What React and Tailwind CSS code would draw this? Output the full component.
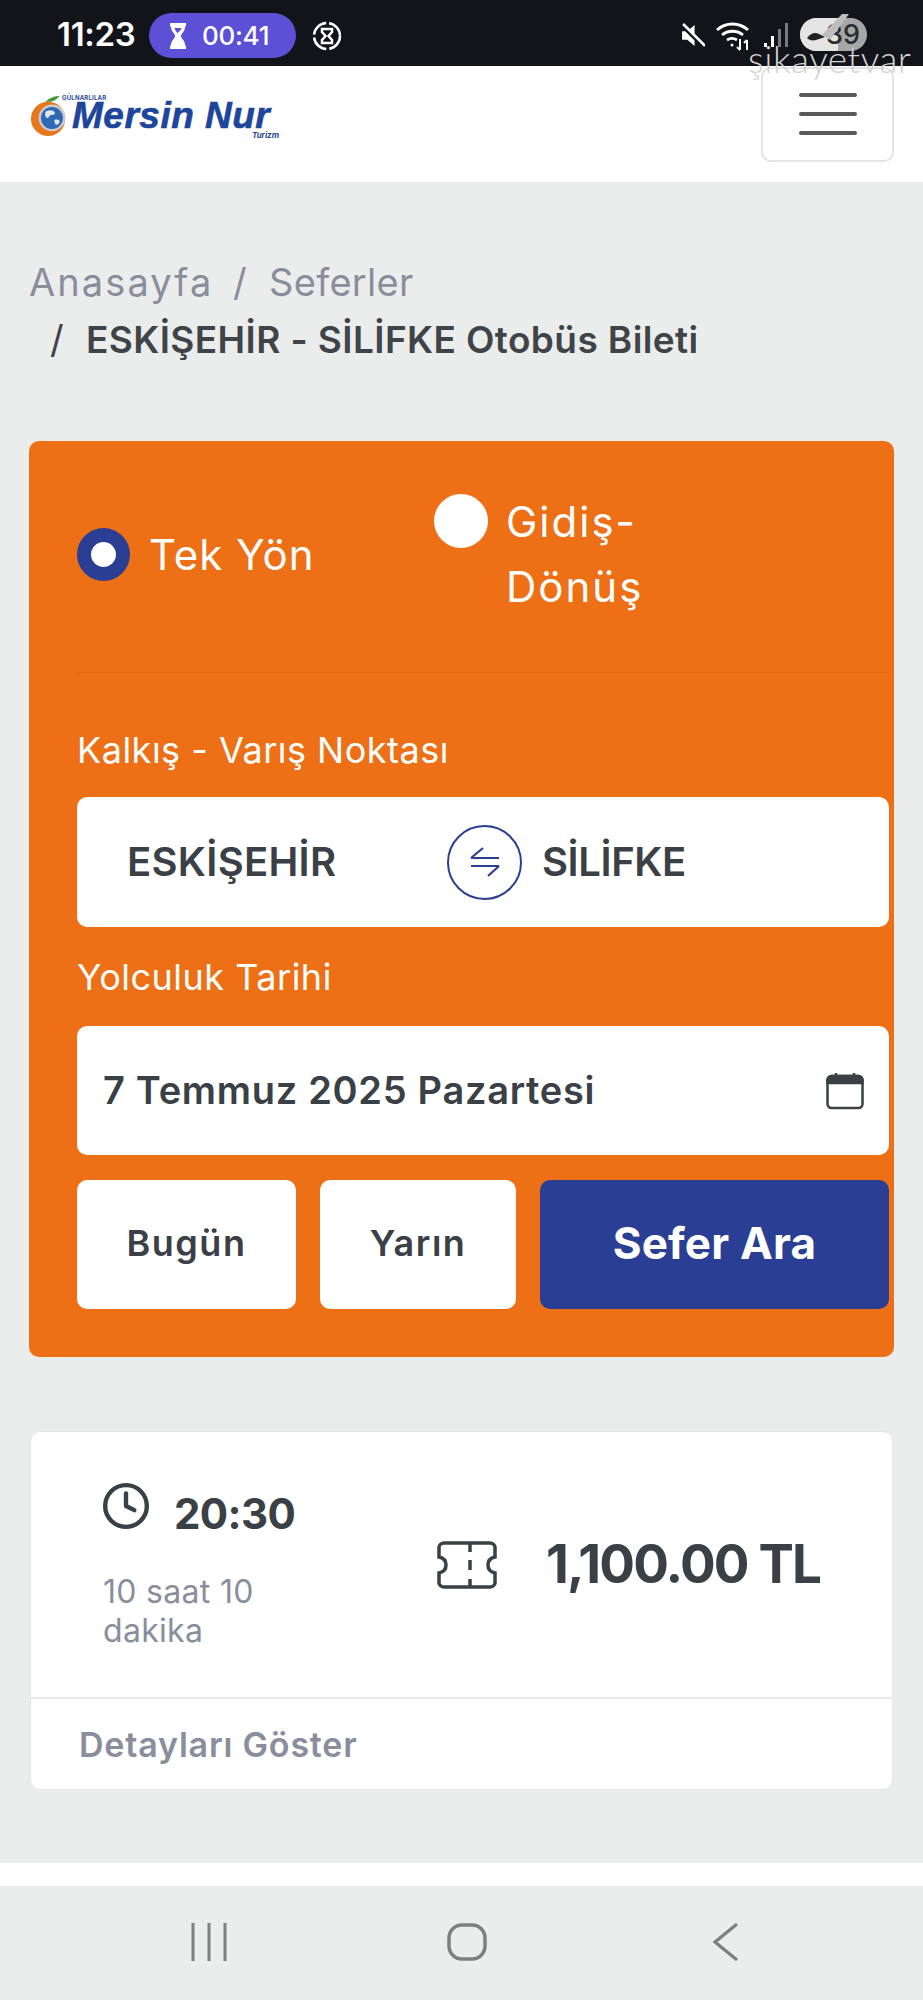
import { Clock } from 'lucide-react';

const font = 'font-["Inter","Noto_Sans",sans-serif]';

function StatusBar() {
    return (
        <div className="relative h-[66px] bg-[#13141a] flex items-center pt-[5px] pl-[57px] text-white">
            <span className="text-[33px] font-semibold tracking-[-0.3px] w-[84px] mt-[-1px]">11:23</span>
            <div className="ml-[8px] w-[147px] h-[45px] rounded-full bg-[#5b50d6] flex items-center pl-[19px] gap-[14px]">
                <svg viewBox="0 0 20 28" className="w-[20px] h-[28px]">
                    <path d="M2 1h16v3l-1 1c0 5-4 6-4 9s4 4 4 9l1 1v3H2v-3l1-1c0-5 4-6 4-9S3 10 3 5L2 4z" fill="#fff" />
                    <path d="M6.500 6h7c-.5 2.500-3.500 4-3.500 5S7 8.500 6.500 6z" fill="#5b50d6" />
                </svg>
                <span className="text-[26px] font-medium tracking-[-0.3px]">00:41</span>
            </div>
            <svg viewBox="0 0 30 30" className="ml-[16px] w-[30px] h-[30px]" fill="none" stroke="#fff">
                <circle cx="15" cy="15" r="13" strokeWidth="2.500" strokeDasharray="18 3" />
                <path d="M10 8h10v3l-3.500 4 3.500 4v3H10v-3l3.500-4L10 11z" strokeWidth="2.500" />
            </svg>

            <div className="ml-auto mr-[173px] flex items-center">
                <svg viewBox="0 0 24 24" className="w-[25px] h-[25px]" fill="#fff">
                    <path d="M2 8h5l7-6v20l-7-6H2z" />
                    <path d="M2 2l21 21" stroke="#13141a" strokeWidth="4" />
                    <path d="M3 1l21 21" stroke="#fff" strokeWidth="2.500" />
                </svg>
                <svg viewBox="0 0 34 30" className="ml-[11px] w-[34px] h-[30px]" fill="none" stroke="#fff" strokeWidth="2.800">
                    <path d="M1 9c9-8 22-8 31 0" />
                    <path d="M6 14c6-5 15-5 21 0" />
                    <path d="M11 19c3-2 7-2 10 0" />
                    <circle cx="16" cy="24" r="1.500" fill="#fff" stroke="none" />
                    <path d="M24 18v11M21 26l3 3M31 29V19M28 22l3-3" strokeWidth="2" />
                </svg>
            </div>

            {/* signal bars */}
            <svg viewBox="0 0 28 28" className="absolute left-[763px] top-[22px] w-[28px] h-[28px]">
                <rect x="1" y="21" width="3" height="4" fill="#fff" />
                <rect x="8" y="14" width="3" height="11" fill="#fff" />
                <rect x="15" y="7" width="3" height="18" fill="#77797d" />
                <rect x="22" y="1" width="3" height="24" fill="#77797d" />
            </svg>

            {/* battery pill with the watermark check on top */}
            <div className="absolute left-[800px] top-[18px] w-[67px] h-[33px] rounded-full bg-[#a6a6a6] overflow-hidden flex items-center">
                <div className="w-[38px] h-full bg-[#e4e4e4]" />
                <span className="absolute left-[26px] text-[27px] leading-[24px] font-medium text-[#2b2b2f]">39</span>
            </div>
            <svg viewBox="0 0 46 36" className="absolute left-[804px] top-[13px] w-[46px] h-[36px]">
                <path d="M3 25c4-5 8-6 12-4l6 3-9 3c-4 1-7 0-9-2z" fill="#222" />
                <path d="M18 22L38 1h7L26 27z" fill="#bdbdbd" />
            </svg>

            <span className="absolute left-[748px] top-[46px] text-[37px] leading-[26px] font-['Lato'] font-light tracking-[0.5px] text-[#d4d4d4] z-10">
                şikayetvar
            </span>
        </div>
    );
}

function Header() {
    return (
        <div className="h-[116px] bg-white flex items-center justify-between pl-[29px] pr-[29px]">
            <div className="relative w-[250px] h-[44px] mt-[-14px]">
                <svg viewBox="0 0 44 44" className="absolute left-0 top-0 w-[42px] h-[42px]">
                    <circle cx="20" cy="25" r="18" fill="#e8761c" />
                    <circle cx="24" cy="24" r="14" fill="#c9ccd0" />
                    <circle cx="24" cy="24" r="11.500" fill="#2f68b4" />
                    <path d="M18 17c4-2 8-1 9 1s-2 3-4 3-2 4-4 3-3-5-1-7zM27 26c3-1 5 0 5 2s-3 4-4 3-2-4-1-5z" fill="#dfe6ee" />
                    <path d="M17 7c4-4 10-6 15-6-3 4-8 7-15 6z" fill="#3f9a36" />
                </svg>
                <span className="absolute left-[33px] top-0 text-[6px] leading-[5px] font-bold tracking-[0.2px] text-[#2c4a9a]">GÜLNARLILAR</span>
                <span className="absolute left-[43px] top-[7px] text-[37px] leading-[28px] font-['Liberation_Sans'] font-bold italic tracking-[0.5px] [-webkit-text-stroke:0.6px_#1d459b] text-[#1d459b] whitespace-nowrap">
                    Mersin Nur
                </span>
                <span className="absolute right-0 top-[36px] text-[8px] leading-[8px] font-bold italic text-[#1d459b]">Turizm</span>
            </div>
            <div className="w-[133px] h-[95px] mt-[-20px] bg-white border-2 border-[#e3e3e3] rounded-[10px] flex flex-col items-center justify-center gap-[15px]">
                <div className="w-[58px] h-[4px] rounded-sm bg-[#5a5a5a]" />
                <div className="w-[58px] h-[4px] rounded-sm bg-[#5a5a5a]" />
                <div className="w-[58px] h-[4px] rounded-sm bg-[#5a5a5a]" />
            </div>
        </div>
    );
}

function Breadcrumb() {
    return (
        <div className="pt-[72px] text-[38px] leading-[57px] text-[#8a8d9c]">
            <div className="flex">
                <span className="w-[204px] tracking-[2.100px]">Anasayfa</span>
                <span className="w-[36px]">/</span>
                <span className="tracking-[0.300px]">Seferler</span>
            </div>
            <div className="flex pl-[21px] text-[#3f4448]">
                <span className="w-[36px]">/</span>
                <span className="font-semibold text-[37px] tracking-[0.400px]">ESKİŞEHİR - SİLİFKE Otobüs Bileti</span>
            </div>
        </div>
    );
}

function SearchCard() {
    return (
        <div className="mt-[73px] bg-[#ee7016] rounded-[10px] pt-[48px] pr-[5px] pb-[48px] pl-[48px] text-white">
            <div className="flex items-center text-[42px] leading-[65px] tracking-[1px]">
                <div className="w-[357px] flex items-center gap-[19px]">
                    <div className="w-[53px] h-[53px] rounded-full bg-[#2a3f94] flex items-center justify-center">
                        <div className="w-[25px] h-[25px] rounded-full bg-white" />
                    </div>
                    <span>Tek Yön</span>
                </div>
                <div className="flex items-start gap-[18px]">
                    <div className="w-[54px] h-[54px] mt-[5px] rounded-full bg-white" />
                    <span className="tracking-[2px]">Gidiş-<br />Dönüş</span>
                </div>
            </div>

            <div className="mt-[53px] h-px bg-[#e4690f]" />

            <div className="mt-[52px] text-[36px] leading-[50px] tracking-[0.500px]">Kalkış - Varış Noktası</div>
            <div className="mt-[22px] h-[130px] bg-white rounded-[10px] flex items-center text-[#3a4045] font-semibold text-[40px]">
                <span className="ml-[50px] w-[320px] tracking-[0.300px]">ESKİŞEHİR</span>
                <div className="w-[75px] h-[75px] rounded-full border-2 border-[#2a3f94] flex items-center justify-center">
                    <svg viewBox="0 0 30 30" className="w-[30px] h-[30px]" fill="none" stroke="#2a3f94" strokeWidth="2.200">
                        <path d="M1 11h28M1 11L13 1" />
                        <path d="M29 19H1M29 19L18 29" />
                    </svg>
                </div>
                <span className="ml-[20px] tracking-[-0.4px]">SİLİFKE</span>
            </div>

            <div className="mt-[25px] text-[36px] leading-[50px] tracking-[0.500px]">Yolculuk Tarihi</div>
            <div className="mt-[24px] h-[129px] bg-white rounded-[10px] flex items-center justify-between pl-[26px] pr-[25px] text-[#3a4045] font-semibold text-[38px] tracking-[0.700px]">
                <span>7 Temmuz 2025 Pazartesi</span>
                <svg viewBox="0 0 38 38" className="w-[38px] h-[38px]" fill="none" stroke="#3a4045" strokeWidth="2.500">
                    <rect x="1.500" y="4" width="35" height="32" rx="4" />
                    <path d="M1.500 9c0-3 2-5 4-5h27c2 0 4 2 4 5v2h-35z" fill="#3a4045" />
                    <path d="M10 1v5M28 1v5" />
                </svg>
            </div>

            <div className="mt-[25px] flex gap-[24px] h-[129px] text-[36px] font-semibold text-[#3a4045] tracking-[1.500px]">
                <button className="w-[219px] pb-[3px] bg-white rounded-[10px]">Bugün</button>
                <button className="w-[196px] pb-[3px] bg-white rounded-[10px]">Yarın</button>
                <button className="flex-1 pb-[3px] bg-[#2a3f94] rounded-[10px] text-white font-bold text-[44px] tracking-[0.200px]">Sefer Ara</button>
            </div>
        </div>
    );
}

function TripCard() {
    return (
        <div className="mt-[74px] mx-px bg-white border border-[#e5e6e6] rounded-[10px]">
            <div className="h-[267px] flex items-center border-b-2 border-[#e8e9e9]">
                <div className="ml-[72px] w-[334px] mt-[4px]">
                    <div className="h-[60px] flex items-start gap-[23px] text-[#3a4045]">
                        <Clock className="w-[50px] h-[50px] mt-[-3px] ml-[-2px]" strokeWidth={2.100} />
                        <span className="text-[42px] leading-[60px] font-bold tracking-[-0.6px]">20:30</span>
                    </div>
                    <div className="mt-[28px] w-[175px] text-[#8a8d9c] text-[32px] leading-[39px] tracking-[0.300px]">10 saat 10 dakika</div>
                </div>
                <svg viewBox="0 0 60 48" className="w-[60px] h-[48px]" fill="none" stroke="#3a4045" strokeWidth="3.500">
                    <path d="M7 2h46c2.500 0 5 2 5 4v10c-5 1-7 4-7 8s2 7 7 8v10c0 2-2.500 4-5 4H7c-2.500 0-5-2-5-4V32c5-1 7-4 7-8s-2-7-7-8V6c0-2 2.500-4 5-4z" />
                    <path d="M33 2v9M33 19v10M33 38v8" />
                </svg>
                <span className="ml-[49px] text-[#3a4045] text-[53px] font-bold tracking-[-1.800px]">1,100.00 TL</span>
            </div>
            <div className="h-[90px] pl-[48px] flex items-center text-[#8a8d9c] text-[34px] font-semibold tracking-[0.800px]">
                Detayları Göster
            </div>
        </div>
    );
}

function NavBar() {
    return (
        <div className="h-[115px] flex items-start pt-[37px] pl-[191px]">
            <svg viewBox="0 0 36 38" className="w-[36px] h-[38px]" stroke="#7d7f80" strokeWidth="3">
                <path d="M2 0v38M18 0v38M34 0v38" />
            </svg>
            <svg viewBox="0 0 40 38" className="ml-[220px] w-[40px] h-[38px]" fill="none" stroke="#7d7f80" strokeWidth="3.500">
                <rect x="2" y="2" width="36" height="34" rx="13" />
            </svg>
            <svg viewBox="0 0 26 38" className="ml-[226px] w-[26px] h-[38px]" fill="none" stroke="#7d7f80" strokeWidth="3.200">
                <path d="M24 1L2 19l22 18" />
            </svg>
        </div>
    );
}

export default function App() {
    return (
        <div className={`w-[923px] h-[2000px] overflow-hidden bg-[#ebeded] ${font}`}>
            <StatusBar />
            <Header />
            <div className="px-[29px]">
                <Breadcrumb />
                <SearchCard />
                <TripCard />
            </div>
            <div className="mt-[73px] h-[23px] bg-white" />
            <NavBar />
        </div>
    );
}
